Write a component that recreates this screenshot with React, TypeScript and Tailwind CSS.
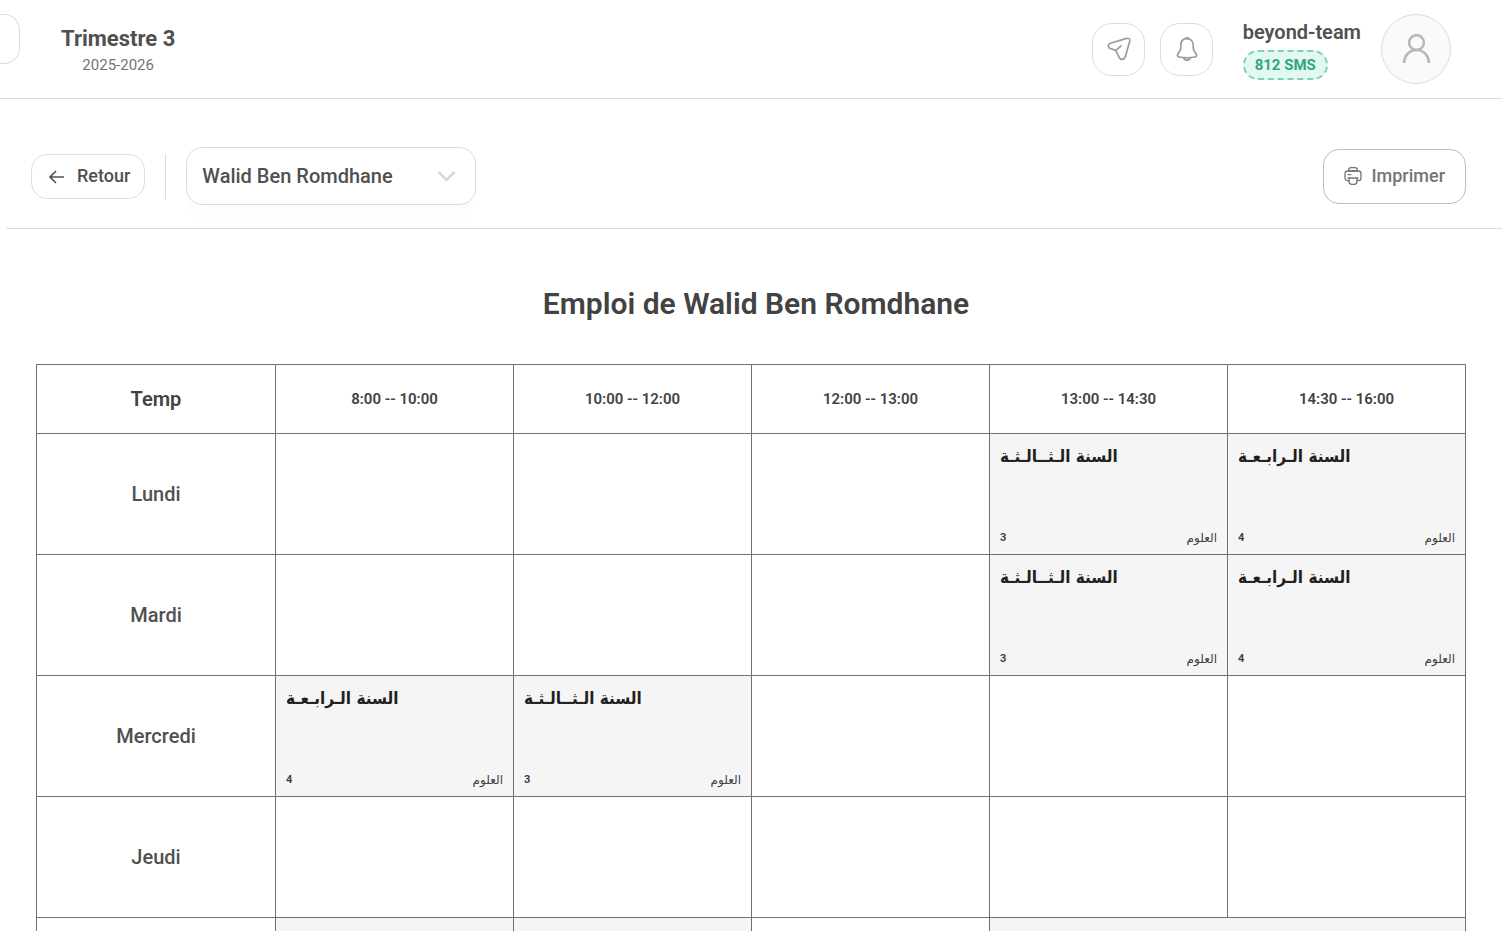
import { useState } from "react";
import type { ReactNode } from "react";

type Lesson = { level: string; subject: string; room: number; span?: number };
type Day = { name: string; slots: (Lesson | null)[] };

const third: Lesson = { level: "السنة الـثــالـثـة", subject: "العلوم", room: 3 };
const fourth: Lesson = { level: "السنة الـرابـعـة", subject: "العلوم", room: 4 };

const hours = ["8:00 -- 10:00", "10:00 -- 12:00", "12:00 -- 13:00", "13:00 -- 14:30", "14:30 -- 16:00"];

const days: Day[] = [
  { name: "Lundi", slots: [null, null, null, third, fourth] },
  { name: "Mardi", slots: [null, null, null, third, fourth] },
  { name: "Mercredi", slots: [fourth, third, null, null, null] },
  { name: "Jeudi", slots: [null, null, null, null, null] },
  { name: "Vendredi", slots: [fourth, third, null, { ...fourth, span: 2 }] },
];

const teachers = ["Walid Ben Romdhane"];

export default function App() {
  const [teacher, setTeacher] = useState(teachers[0]);

  return (
    <div className="flex h-screen flex-col bg-white font-[Roboto,sans-serif] text-[#505050]">
      <Header />
      <main className="ml-1.5 min-h-0 flex-1 overflow-y-auto [scrollbar-width:none]">
        {/* Toolbar */}
        <div className="flex items-center border-b border-[#dcdcdc] pt-12 pr-9 pb-[23px] pl-[25px]">
          <button className="flex h-[45px] items-center gap-3 rounded-2xl border border-[#e0e0e0] pr-3.5 pl-[15px] text-lg font-medium">
            <svg width="18" height="18" viewBox="0 0 18 18" fill="none" stroke="currentColor" strokeWidth="1.6">
              <path d="M17 10H3M9 4L3 10L9 16" />
            </svg>
            Retour
          </button>
          <div className="mx-5 h-[45px] w-px bg-[#dcdcdc]" />
          <div className="relative w-[290px]">
            <select
              aria-label="Enseignant"
              value={teacher}
              onChange={(e) => setTeacher(e.target.value)}
              className="h-[58px] w-full appearance-none rounded-2xl border border-[#dcdcdc] bg-white pr-12 pl-[15px] text-xl font-medium shadow-[0_20px_10px_-4px_rgba(0,0,0,0.01)]"
            >
              {teachers.map((t) => (
                <option key={t}>{t}</option>
              ))}
            </select>
            <svg
              className="pointer-events-none absolute top-6 right-5 text-[#d8d8d8]"
              width="18"
              height="12"
              viewBox="0 0 18 12"
              fill="none"
              stroke="currentColor"
              strokeWidth="2.6"
            >
              <path d="M0.5 1L8.5 9L16.5 1" />
            </svg>
          </div>
          <button className="ml-auto flex h-[55px] items-center gap-[9px] rounded-2xl border border-[#bdbdbd] px-5 text-lg font-medium text-[#757575]">
            <PrinterIcon />
            Imprimer
          </button>
        </div>

        <h1 className="pt-[55px] pb-10 pl-1 text-center text-3xl leading-10 font-semibold text-[#424242]">
          Emploi de {teacher}
        </h1>

        {/* Timetable */}
        <div className="mr-9 ml-[30px]">
          <table className="w-full table-fixed border-collapse text-[#424242]">
            <thead>
              <tr className="h-[69px]">
                <th className="w-[239px] border border-[#707070] text-xl font-semibold">Temp</th>
                {hours.map((hour) => (
                  <th key={hour} className="border border-[#707070] text-[15px] font-semibold">
                    {hour}
                  </th>
                ))}
              </tr>
            </thead>
            <tbody>
              {days.map((day) => (
                <tr key={day.name} className="h-[121px]">
                  <th className="border border-[#707070] text-xl font-medium text-[#505050]">{day.name}</th>
                  {day.slots.map((lesson, i) => (
                    <Slot key={i} lesson={lesson} />
                  ))}
                </tr>
              ))}
            </tbody>
          </table>
        </div>
      </main>
    </div>
  );
}

function Header() {
  return (
    <header className="flex h-[99px] shrink-0 items-center border-b border-[#dcdcdc] pr-[51px]">
      <button aria-label="Menu" className="mb-5 h-[50px] w-5 rounded-r-2xl border border-l-0 border-[#dcdcdc]" />
      <div className="ml-[41px] pt-1 text-center">
        <p className="text-[22px] leading-7 font-bold">Trimestre 3</p>
        <p className="text-[15px] leading-6 text-[#757575]">2025-2026</p>
      </div>

      <div className="ml-auto flex items-center">
        <div className="flex gap-[15px]">
          <IconButton label="Messages">
            <path d="M3.4 6.2L19.6 1.4C22 .8 23.2 2 22.7 4.2L18.6 18.8C17.6 23 13.6 23.6 12 20.2L8.8 13.4L3.3 11.5C.5 10.4 .6 7.2 3.4 6.2ZM8.8 13.4L14 8.8" />
          </IconButton>
          <IconButton label="Notifications">
            <path d="M12 1.6C8 1.6 5.8 4.4 5.8 8.2V11C5.8 14.6 2.4 16 2.4 18.4C2.4 19.3 3 19.8 4 20C9.3 21 14.7 21 20 20C21 19.8 21.6 19.3 21.6 18.4C21.6 16 18.2 14.6 18.2 11V8.2C18.2 4.4 16 1.6 12 1.6ZM10.2 1.7C10.6 .5 13.4 .5 13.8 1.7M8.4 20.8C9.4 24 14.6 24 15.6 20.8" />
          </IconButton>
        </div>
        <div className="ml-[30px] flex flex-col items-start gap-1">
          <p className="text-xl leading-7 font-semibold">beyond-team</p>
          <span className="rounded-full border-2 border-dashed border-[#7dd3b6] bg-[#e3f8f1] px-2.5 text-[15px] leading-[26px] font-bold text-[#2fa582]">
            812 SMS
          </span>
        </div>
        <button
          aria-label="Profil"
          className="ml-5 flex size-[70px] items-center justify-center rounded-full border border-[#dcdcdc] bg-[#fafafa] text-[#b8b8b8]"
        >
          <svg width="30" height="30" viewBox="0 0 30 30" fill="none" stroke="currentColor" strokeWidth="2.6">
            <circle cx="15.5" cy="8.6" r="7.4" />
            <path d="M3.1 29C3.5 21 8.5 16 15.5 16C22.5 16 27.5 21 27.9 29" />
          </svg>
        </button>
      </div>
    </header>
  );
}

function IconButton({ label, children }: { label: string; children: ReactNode }) {
  return (
    <button
      aria-label={label}
      className="flex size-[53px] items-center justify-center rounded-[20px] border border-[#dcdcdc] text-[#989b9f]"
    >
      <svg
        width="25"
        height="24"
        viewBox="-1 0 25 24"
        fill="none"
        stroke="currentColor"
        strokeWidth="1.7"
        strokeLinecap="round"
        strokeLinejoin="round"
      >
        {children}
      </svg>
    </button>
  );
}

function PrinterIcon() {
  return (
    <svg width="18" height="18" viewBox="1 1 18 18" fill="none" stroke="currentColor" strokeWidth="1.3" strokeLinecap="round">
      <path d="M5.6 5V4C5.6 2.4 6.4 1.7 8 1.7H12C13.6 1.7 14.4 2.4 14.4 4V5Z" />
      <path d="M5.8 14.6H4.6C2.8 14.6 2 13.6 2 12V7.8C2 6 2.8 5 4.6 5H15.4C17.2 5 18 6 18 7.8V12C18 13.6 17.2 14.6 15.4 14.6H14.2" />
      <path d="M5 12H15M6 12V15.6C6 17.6 7 18.3 8.8 18.3H11.2C13 18.3 14 17.6 14 15.6V12M5.2 8.6H8" />
    </svg>
  );
}

function Slot({ lesson }: { lesson: Lesson | null }) {
  if (!lesson) return <td className="border border-[#707070]" />;

  return (
    <td colSpan={lesson.span} className="border border-[#707070] bg-[#f5f5f5] p-0">
      <div className="flex h-[120px] flex-col justify-between px-2.5 py-2">
        <p className="font-['DejaVu_Sans_Condensed','DejaVu_Sans',sans-serif] text-[17px] leading-7 font-bold text-[#212121]">
          {lesson.level}
        </p>
        <div className="flex items-center justify-between text-[11px] leading-4">
          <span className="font-bold">{lesson.room}</span>
          <span className="font-['DejaVu_Sans',sans-serif] text-xs leading-4">{lesson.subject}</span>
        </div>
      </div>
    </td>
  );
}
